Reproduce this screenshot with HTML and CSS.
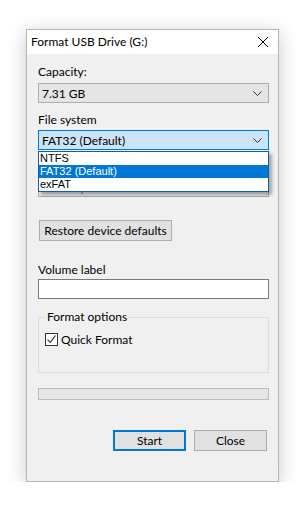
FILE: index.html
```html
<!DOCTYPE html>
<html lang="en">
  <head>
    <meta charset="UTF-8" />
    <meta name="viewport" content="width=device-width, initial-scale=1.0" />
    <title>Format USB Drive (G:)</title>
    <link rel="stylesheet" href="styles.css">
  </head>
  <body>
    <div class="dialog">
      <div class="titlebar">
        <span class="title">Format USB Drive (G:)</span>
        <svg class="close" width="12" height="12" viewBox="0 0 12 12">
          <path d="M1 1 L11 11 M11 1 L1 11" stroke="#000" stroke-width="1" fill="none" />
        </svg>
      </div>
      <div class="content">
        <div class="label">Capacity:</div>
        <div class="select">
          <span>7.31 GB</span>
          <svg class="chevron" width="9" height="5" viewBox="0 0 9 5">
            <path d="M0.5 0.5 L4.5 4.5 L8.5 0.5" stroke="#333" fill="none" />
          </svg>
        </div>

        <div class="label gap">File system</div>
        <div class="field">
          <div class="select focused">
            <span>FAT32 (Default)</span>
            <svg class="chevron" width="9" height="5" viewBox="0 0 9 5">
              <path d="M0.5 0.5 L4.5 4.5 L8.5 0.5" stroke="#333" fill="none" />
            </svg>
          </div>
          <ul class="dropdown">
            <li>NTFS</li>
            <li class="active">FAT32 (Default)</li>
            <li>exFAT</li>
          </ul>
        </div>

        <!-- covered by the open list -->
        <div class="label gap covered">Allocation unit size</div>
        <div class="select">
          <span class="peek">4096 bytes</span>
        </div>

        <button class="btn restore" type="button">Restore device defaults</button>

        <div class="label volume">Volume label</div>
        <input class="textbox" type="text" />

        <fieldset class="options">
          <legend>Format options</legend>
          <label class="check">
            <span class="box">
              <svg width="11" height="11" viewBox="0 0 11 11">
                <path d="M1.5 5.5 L4.2 8.5 L9.5 1.5" stroke="#222" stroke-width="1.1" fill="none" />
              </svg>
            </span>
            Quick Format
          </label>
        </fieldset>

        <div class="progress"></div>

        <div class="actions">
          <button class="btn primary" type="button">Start</button>
          <button class="btn" type="button">Close</button>
        </div>
      </div>
    </div>
  </body>
</html>
```

FILE: styles.css
```css
* {
  box-sizing: border-box;
}
body {
  margin: 0;
  background: #fff;
  font-family: Lato, "Noto Sans", sans-serif;
  font-size: 12px;
  color: #000;
}
.dialog {
  width: 253px;
  height: 453px;
  margin: 29px 0 0 26px;
  background: #f0f0f0;
  border: 1px solid #b5b5b5;
  box-shadow: 0 4px 18px rgba(0, 0, 0, 0.22);
}
.titlebar {
  height: 24px;
  background: #fff;
  display: flex;
  align-items: center;
  justify-content: space-between;
  padding: 0 9px 0 4px;
}
.title {
  line-height: 24px;
}
.content {
  padding: 10px 9px 0 11px;
}
.label {
  line-height: 15px;
  height: 15px;
}
.label.gap {
  margin-top: 9px;
}
.label.covered {
  visibility: hidden;
}
.select {
  height: 20px;
  margin-top: 4px;
  background: #e5e5e5;
  border: 1px solid #adadad;
  display: flex;
  align-items: center;
  justify-content: space-between;
  padding: 0 6px 0 3px;
}
.label.gap + .select,
.label.gap + .field .select {
  margin-top: 3px;
}
.select.focused {
  background: #cce4f7;
  border-color: #0078d7;
}
.peek {
  color: #6d6d6d;
}
.field {
  position: relative;
}
.dropdown {
  position: absolute;
  left: 0;
  right: 0;
  top: 21px;
  margin: 0;
  padding: 0;
  list-style: none;
  background: #fff;
  border: 1px solid #0b5fae;
  box-shadow: 3px 3px 3px rgba(0, 0, 0, 0.3);
  font-family: "Liberation Sans", Arial, sans-serif;
  font-size: 11px;
  z-index: 2;
}
.dropdown li {
  height: 13px;
  line-height: 13px;
  padding-left: 1px;
}
.dropdown li.active {
  background: #0078d7;
  color: #fff;
}
.btn {
  font-family: Lato, "Noto Sans", sans-serif;
  font-size: 12px;
  color: #000;
  background: #e1e1e1;
  border: 1px solid #adadad;
  height: 21px;
  padding: 0;
  display: block;
}
.restore {
  width: 133px;
  margin: 23px 0 0 1px;
}
.label.volume {
  margin-top: 21px;
}
.textbox {
  display: block;
  width: 100%;
  height: 20px;
  margin: 2px 0 0;
  border: 1px solid #7a7a7a;
  background: #fff;
}
.options {
  margin: 10px 0 0;
  padding: 7px 0 0 6px;
  height: 64px;
  border: 1px solid #dcdcdc;
}
.options legend {
  padding: 0 1px;
  margin-left: 1px;
  line-height: 16px;
}
.check {
  display: flex;
  align-items: center;
  gap: 3px;
}
.box {
  width: 13px;
  height: 13px;
  border: 1px solid #333;
  background: #fff;
  display: flex;
  align-items: center;
  justify-content: center;
}
.progress {
  height: 12px;
  margin-top: 15px;
  background: #e6e6e6;
  border: 1px solid #bcbcbc;
}
.actions {
  display: flex;
  justify-content: flex-end;
  gap: 8px;
  margin-top: 30px;
  padding-right: 2px;
}
.actions .btn {
  width: 73px;
}
.btn.primary {
  border: 2px solid #0078d7;
}
```
